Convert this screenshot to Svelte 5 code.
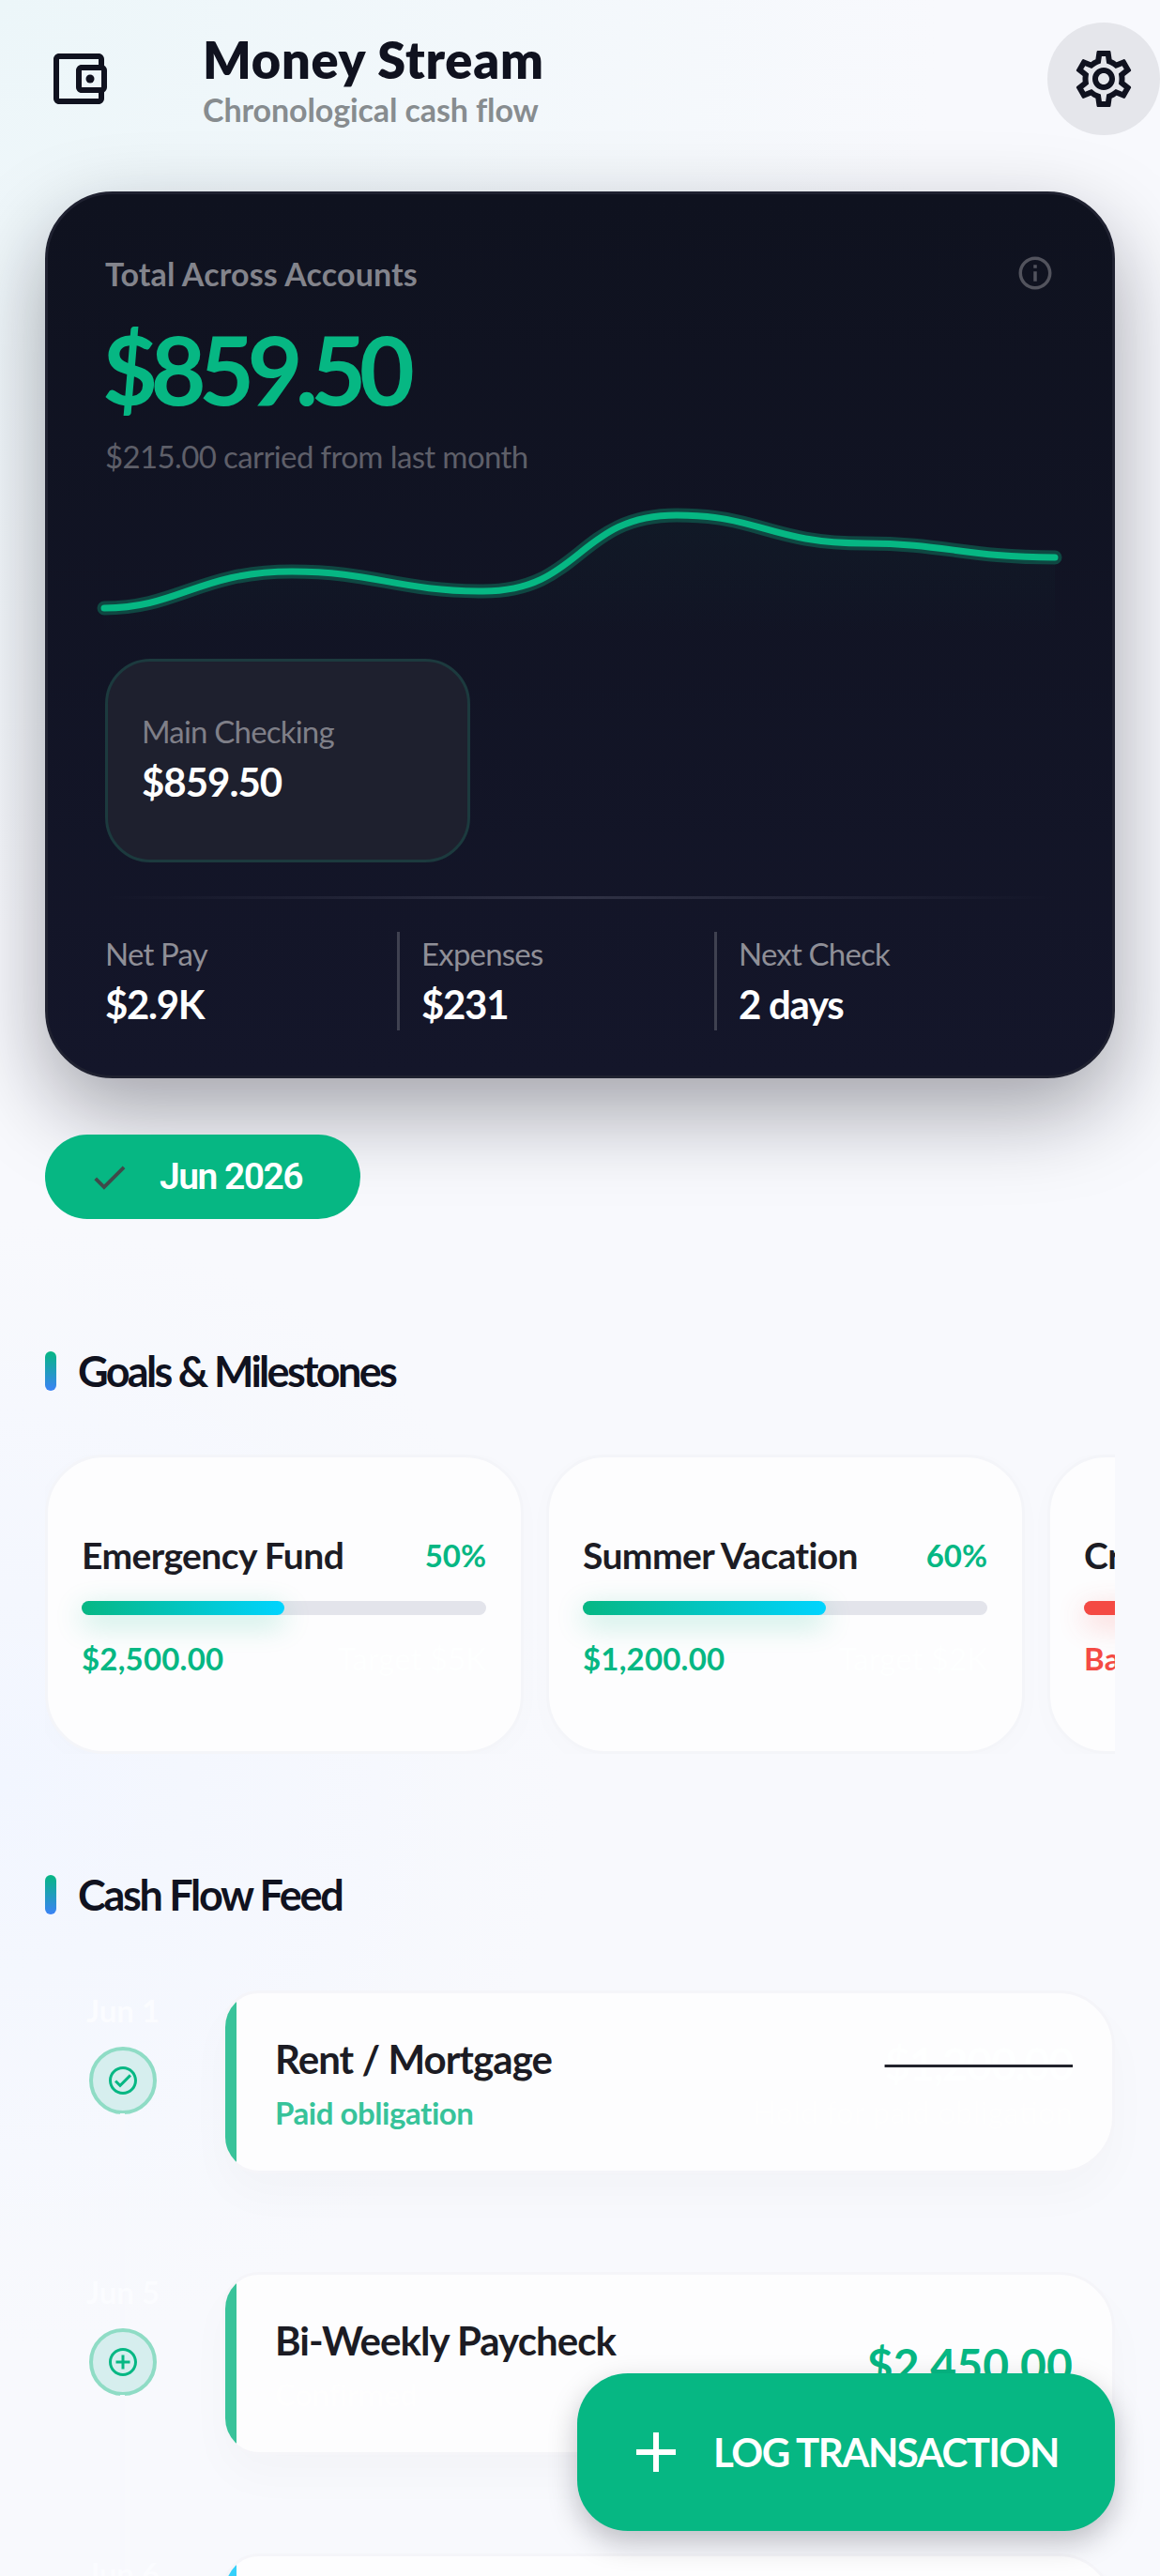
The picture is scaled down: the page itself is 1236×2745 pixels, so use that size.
<script>
  const stats = [
    { label: 'Net Pay', value: '$2.9K' },
    { label: 'Expenses', value: '$231' },
    { label: 'Next Check', value: '2 days' }
  ];
  const goals = [
    { name: 'Emergency Fund', pct: 50, amount: '$2,500.00', target: 'Target $5K', tone: 'green' },
    { name: 'Summer Vacation', pct: 60, amount: '$1,200.00', target: 'Target $2K', tone: 'green' },
    { name: 'Credit Card', pct: 30, amount: 'Balance $900', target: 'Target $0', tone: 'red' }
  ];
  const feed = [
    { date: 'Jun 1', icon: 'check', title: 'Rent / Mortgage', sub: 'Paid obligation', subClass: 'paid', amount: '$1,200.00', note: 'Hold for paid obligation', struck: true, tone: 'green' },
    { date: 'Jun 5', icon: 'plus', title: 'Bi-Weekly Paycheck', sub: 'Confirmed', subClass: 'ghost', amount: '$2,450.00', note: '', struck: false, tone: 'green' },
    { date: 'Jun 6', icon: 'plus', title: 'Groceries', sub: 'Planned', subClass: 'ghost', amount: '$120.00', note: '', struck: false, tone: 'cyan' }
  ];
  const spark = 'M111 648 C190 648 212 609 311 609 C398 609 425 630 515 630 C620 630 615 549 721 549 C810 549 820 579 922 579 C1005 579 1030 594 1124 594';
</script>

<div class="page">
  <header class="top">
    <svg class="wallet" viewBox="0 0 24 24" aria-hidden="true">
      <path d="M21 7.28V5c0-1.1-.9-2-2-2H5c-1.11 0-2 .9-2 2v14c0 1.1.89 2 2 2h14c1.1 0 2-.9 2-2v-2.28c.59-.35 1-.98 1-1.72V9c0-.74-.41-1.37-1-1.72zM20 9v6h-7V9h7zM5 19V5h14v2h-6c-1.1 0-2 .9-2 2v6c0 1.1.9 2 2 2h6v2H5z"/>
      <circle cx="16" cy="12" r="1.5"/>
    </svg>
    <div class="heading">
      <h1>Money Stream</h1>
      <p>Chronological cash flow</p>
    </div>
    <button class="gear" aria-label="Settings">
      <svg viewBox="0 0 24 24" aria-hidden="true">
        <path d="M19.43 12.98c.04-.32.07-.64.07-.98 0-.34-.03-.66-.07-.98l2.11-1.65c.19-.15.24-.42.12-.64l-2-3.46c-.09-.16-.26-.25-.44-.25-.06 0-.12.01-.17.03l-2.49 1c-.52-.4-1.08-.73-1.69-.98l-.38-2.65C14.46 2.18 14.25 2 14 2h-4c-.25 0-.46.18-.49.42l-.38 2.65c-.61.25-1.17.59-1.69.98l-2.49-1c-.06-.02-.12-.03-.18-.03-.17 0-.34.09-.43.25l-2 3.46c-.13.22-.07.49.12.64l2.11 1.65c-.04.32-.07.65-.07.98 0 .33.03.66.07.98l-2.11 1.65c-.19.15-.24.42-.12.64l2 3.46c.09.16.26.25.44.25.06 0 .12-.01.17-.03l2.49-1c.52.4 1.08.73 1.69.98l.38 2.65c.03.24.24.42.49.42h4c.25 0 .46-.18.49-.42l.38-2.65c.61-.25 1.17-.59 1.69-.98l2.49 1c.06.02.12.03.18.03.17 0 .34-.09.43-.25l2-3.46c.12-.22.07-.49-.12-.64l-2.11-1.65zm-1.98-1.71c.04.31.05.52.05.73 0 .21-.02.43-.05.73l-.14 1.13.89.7 1.08.84-.7 1.21-1.27-.51-1.04-.42-.9.68c-.43.32-.84.56-1.25.73l-1.06.43-.16 1.13-.2 1.35h-1.4l-.19-1.35-.16-1.13-1.06-.43c-.43-.18-.83-.41-1.23-.71l-.91-.7-1.06.43-1.27.51-.7-1.21 1.08-.84.89-.7-.14-1.13c-.03-.31-.05-.54-.05-.74s.02-.43.05-.73l.14-1.13-.89-.7-1.08-.84.7-1.21 1.27.51 1.04.42.9-.68c.43-.32.84-.56 1.25-.73l1.06-.43.16-1.13.2-1.35h1.39l.19 1.35.16 1.13 1.06.43c.43.18.83.41 1.23.71l.91.7 1.06-.43 1.27-.51.7 1.21-1.07.85-.89.7.14 1.13zM12 8c-2.21 0-4 1.79-4 4s1.79 4 4 4 4-1.79 4-4-1.79-4-4-4zm0 6c-1.1 0-2-.9-2-2s.9-2 2-2 2 .9 2 2-.9 2-2 2z"/>
      </svg>
    </button>
  </header>

  <section class="hero">
    <div class="hero-top">
      <span class="hero-label">Total Across Accounts</span>
      <svg class="info" viewBox="0 0 24 24" aria-hidden="true">
        <path d="M11 7h2v2h-2zm0 4h2v6h-2zm1-9C6.48 2 2 6.48 2 12s4.48 10 10 10 10-4.48 10-10S17.52 2 12 2zm0 18c-4.41 0-8-3.59-8-8s3.59-8 8-8 8 3.59 8 8-3.59 8-8 8z"/>
      </svg>
    </div>
    <div class="hero-amount">$859.50</div>
    <div class="hero-sub">$215.00 carried from last month</div>
    <svg class="spark" viewBox="100 530 1034 150" aria-hidden="true">
      <defs>
        <linearGradient id="sparkfill" x1="0" y1="0" x2="0" y2="1">
          <stop offset="0" stop-color="#06b783" stop-opacity="0.035"/>
          <stop offset="1" stop-color="#06b783" stop-opacity="0"/>
        </linearGradient>
      </defs>
      <path d="{spark} L1124 680 L111 680 Z" fill="url(#sparkfill)"/>
      <path d={spark} class="halo"/>
      <path d={spark} class="line"/>
    </svg>
    <div class="account">
      <span class="account-name">Main Checking</span>
      <span class="account-value">$859.50</span>
    </div>
    <div class="rule"></div>
    <div class="stats">
      {#each stats as s}
        <div class="stat">
          <span class="stat-label">{s.label}</span>
          <span class="stat-value">{s.value}</span>
        </div>
      {/each}
    </div>
  </section>

  <button class="chip">
    <svg viewBox="0 0 24 24" aria-hidden="true"><path d="M9 16.17L4.83 12l-1.42 1.41L9 19 21 7l-1.41-1.41z"/></svg>
    <span>Jun 2026</span>
  </button>

  <h2 class="section goals-head"><i></i>Goals &amp; Milestones</h2>
  <div class="goals">
    {#each goals as g}
      <article class="goal {g.tone}">
        <div class="goal-row">
          <span class="goal-name">{g.name}</span>
          <span class="goal-pct">{g.pct}%</span>
        </div>
        <div class="track"><div class="fill" style="width: {g.pct}%"></div></div>
        <div class="goal-row foot">
          <span class="goal-amount">{g.amount}</span>
          <span class="goal-target">{g.target}</span>
        </div>
      </article>
    {/each}
  </div>

  <h2 class="section feed-head"><i></i>Cash Flow Feed</h2>
  <div class="feed">
    {#each feed as t}
      <div class="item">
        <div class="when">
          <span class="date">{t.date}</span>
          <span class="node">
            <svg viewBox="0 0 24 24" aria-hidden="true">
              {#if t.icon === 'check'}
                <path d="M12 2C6.48 2 2 6.48 2 12s4.48 10 10 10 10-4.48 10-10S17.52 2 12 2zm0 18c-4.41 0-8-3.59-8-8s3.59-8 8-8 8 3.59 8 8-3.59 8-8 8zm4.59-12.42L10 14.17l-2.59-2.58L6 13l4 4 8-8z"/>
              {:else}
                <path d="M13 7h-2v4H7v2h4v4h2v-4h4v-2h-4V7zm-1-5C6.48 2 2 6.48 2 12s4.48 10 10 10 10-4.48 10-10S17.52 2 12 2zm0 18c-4.41 0-8-3.59-8-8s3.59-8 8-8 8 3.59 8 8-3.59 8-8 8z"/>
              {/if}
            </svg>
          </span>
        </div>
        <article class="tx {t.tone}">
          <div class="tx-left">
            <span class="tx-title">{t.title}</span>
            <span class="tx-sub {t.subClass}">{t.sub}</span>
          </div>
          <div class="tx-right">
            <span class="tx-amount" class:struck={t.struck}>{t.amount}</span>
            {#if t.note}<span class="tx-note">{t.note}</span>{/if}
          </div>
        </article>
      </div>
    {/each}
  </div>

  <button class="fab">
    <svg viewBox="0 0 24 24" aria-hidden="true"><path d="M19 13h-6v6h-2v-6H5v-2h6V5h2v6h6v2z"/></svg>
    <span>LOG TRANSACTION</span>
  </button>
</div>

<style>
  :global(body) {
    margin: 0;
  }
  .page {
    position: relative;
    height: 2745px;
    overflow: hidden;
    font-family: Lato, "Noto Sans", sans-serif;
    color: #10121f;
    background:
      radial-gradient(circle at 0 0, #ecf6f9 0, rgba(236, 246, 249, 0) 1000px),
      radial-gradient(circle at 0 1900px, #f2f6ff 0, rgba(242, 246, 255, 0) 600px),
      #f8f9fd;
  }
  button {
    font: inherit;
    border: 0;
    cursor: pointer;
  }

  .top {
    display: flex;
    align-items: center;
    height: 120px;
    padding: 24px 0 0 48px;
  }
  .wallet {
    width: 72px;
    height: 72px;
    fill: #10121f;
    flex: none;
  }
  .heading {
    flex: 1;
    margin-left: 96px;
  }
  h1 {
    margin: 0;
    font-size: 54px;
    line-height: 62px;
    font-weight: 800;
    letter-spacing: 0.8px;
  }
  .heading p {
    margin: 3px 0 0;
    font-size: 34px;
    line-height: 38px;
    font-weight: 700;
    letter-spacing: -0.1px;
    color: #878c8f;
  }
  .gear {
    width: 120px;
    height: 120px;
    border-radius: 50%;
    background: #e5e6eb;
    padding: 24px;
    flex: none;
  }
  .gear svg {
    display: block;
    width: 72px;
    height: 72px;
    fill: #10121f;
  }

  .hero {
    box-sizing: border-box;
    width: 1140px;
    height: 945px;
    margin: 60px 0 0 48px;
    padding: 63px 61px 48px;
    border: 3px solid #1f2130;
    border-radius: 72px;
    background: linear-gradient(180deg, #0f121f, #14162a);
    box-shadow: 0 36px 90px rgba(10, 10, 25, 0.36);
  }
  .hero-top {
    display: flex;
    justify-content: space-between;
    align-items: center;
    height: 42px;
  }
  .hero-label {
    font-size: 34px;
    font-weight: 700;
    letter-spacing: 0.15px;
    color: #83848c;
  }
  .info {
    width: 42px;
    height: 42px;
    fill: #52535d;
  }
  .hero-amount {
    margin: 27px 0 0 -3px;
    font-size: 102px;
    line-height: 108px;
    font-weight: 700;
    letter-spacing: -7.7px;
    color: #06b783;
  }
  .hero-sub {
    margin-top: 18px;
    font-size: 33px;
    line-height: 42px;
    letter-spacing: -0.62px;
    color: #5e5f69;
  }
  .spark {
    display: block;
    width: 1034px;
    height: 150px;
    margin: 23px 0 0 -12px;
    overflow: visible;
    fill: none;
  }
  .halo {
    stroke: #0f4742;
    stroke-width: 15;
    stroke-linecap: round;
    fill: none;
  }
  .line {
    stroke: #06b783;
    stroke-width: 7;
    stroke-linecap: round;
    fill: none;
  }
  .account {
    box-sizing: border-box;
    width: 389px;
    height: 217px;
    margin-top: 22px;
    padding: 0 0 3px 36px;
    display: flex;
    flex-direction: column;
    justify-content: center;
    border: 3px solid #1c3a3e;
    border-radius: 48px;
    background: #1e202e;
  }
  .account-name {
    font-size: 33px;
    line-height: 36px;
    letter-spacing: -0.8px;
    color: #7f7f88;
  }
  .account-value {
    margin-top: 12px;
    font-size: 42px;
    line-height: 48px;
    font-weight: 700;
    letter-spacing: -1px;
    color: #fff;
  }
  .rule {
    height: 3px;
    margin-top: 36px;
    background: linear-gradient(90deg, transparent, #2f3144 50%, transparent);
  }
  .stats {
    display: grid;
    grid-template-columns: 311px 338px 1fr;
    height: 105px;
    margin-top: 35px;
  }
  .stat {
    display: flex;
    flex-direction: column;
    justify-content: center;
    padding-left: 23px;
    border-left: 3px solid #3f4150;
  }
  .stat:first-child {
    padding-left: 0;
    border-left: 0;
  }
  .stat-label {
    font-size: 33px;
    line-height: 36px;
    letter-spacing: -0.8px;
    color: #8f8f97;
  }
  .stat-value {
    margin-top: 12px;
    font-size: 42px;
    line-height: 48px;
    font-weight: 700;
    letter-spacing: -1.3px;
    color: #fff;
  }

  .chip {
    display: flex;
    align-items: center;
    box-sizing: border-box;
    width: 336px;
    height: 90px;
    margin: 60px 0 0 48px;
    padding: 0 0 0 46px;
    border-radius: 45px;
    background: #06b783;
    color: #fff;
    font-family: Roboto, sans-serif;
    font-size: 39px;
    font-weight: 600;
    letter-spacing: -1.5px;
  }
  .chip svg {
    width: 45px;
    height: 45px;
    fill: #3f4a4a;
    flex: none;
    margin-right: 31px;
  }

  .section {
    display: flex;
    align-items: center;
    height: 42px;
    margin: 0 0 0 48px;
    font-size: 45px;
    font-weight: 700;
    color: #10121f;
  }
  .section i {
    width: 12px;
    height: 42px;
    margin-right: 23px;
    border-radius: 6px;
    background: linear-gradient(180deg, #06b783, #3b82f6);
  }
  .goals-head {
    margin-top: 141px;
    letter-spacing: -2.7px;
  }
  .feed-head {
    margin-top: 129px;
    letter-spacing: -2.3px;
  }

  .goals {
    display: flex;
    gap: 24px;
    width: 1140px;
    height: 319px;
    margin: 68px 0 0 48px;
    overflow: hidden;
  }
  .goal {
    box-sizing: border-box;
    flex: none;
    width: 510px;
    height: 319px;
    padding: 3px 37px 0 36px;
    display: flex;
    flex-direction: column;
    justify-content: center;
    border: 3px solid #f4f5f9;
    border-radius: 63px;
    background: #fdfdfe;
    box-shadow: 0 6px 30px rgba(0, 0, 0, 0.015);
  }
  .goal-row {
    display: flex;
    justify-content: space-between;
    align-items: center;
    height: 48px;
  }
  .goal-row.foot {
    height: 44px;
    margin-top: 24px;
  }
  .goal-name {
    font-size: 39px;
    font-weight: 700;
    letter-spacing: -0.6px;
    white-space: nowrap;
    color: #1c1c24;
  }
  .goal-pct {
    font-size: 33px;
    font-weight: 700;
    color: #06b783;
  }
  .goal.red .goal-pct,
  .goal.red .goal-amount {
    color: #f44a44;
  }
  .track {
    height: 15px;
    margin-top: 25px;
    border-radius: 8px;
    background: #e3e4eb;
  }
  .fill {
    height: 100%;
    border-radius: 8px;
    background: linear-gradient(90deg, #06b783, #00d4ff);
    box-shadow: 0 9px 30px rgba(6, 183, 131, 0.3);
  }
  .goal.red .fill {
    background: #f44a44;
    box-shadow: 0 9px 30px rgba(244, 74, 68, 0.3);
  }
  .goal-amount {
    font-size: 33px;
    font-weight: 700;
    letter-spacing: 0.2px;
    color: #06b783;
    white-space: nowrap;
  }
  .goal-target {
    font-size: 33px;
    color: #feffff;
    white-space: nowrap;
  }

  .feed {
    margin: 81px 48px 0 48px;
  }
  .item {
    display: grid;
    grid-template-columns: 166px 1fr;
    column-gap: 23px;
    margin-bottom: 105px;
  }
  .when {
    position: relative;
    display: flex;
    flex-direction: column;
    align-items: center;
    padding-top: 3px;
  }
  .when::after {
    content: "";
    position: absolute;
    left: 80px;
    top: 131px;
    width: 5px;
    height: 228px;
    background: #f7f8fd;
  }
  .date {
    font-size: 33px;
    line-height: 36px;
    font-weight: 700;
    color: #fbfcff;
  }
  .node {
    box-sizing: border-box;
    display: flex;
    align-items: center;
    justify-content: center;
    width: 72px;
    height: 72px;
    margin-top: 21px;
    border: 4.5px solid #8fdcc5;
    border-radius: 50%;
    background: #d6eeee;
  }
  .node svg {
    width: 36px;
    height: 36px;
    fill: #06b783;
  }
  .tx {
    position: relative;
    box-sizing: border-box;
    display: flex;
    justify-content: space-between;
    align-items: center;
    height: 195px;
    padding: 3px 42px 0 53px;
    overflow: hidden;
    border: 3px solid #f5f5f9;
    border-radius: 39px 60px 60px 39px;
    background: #fdfdfe;
    box-shadow: 0 24px 48px rgba(0, 0, 0, 0.025);
  }
  .tx::before {
    content: "";
    position: absolute;
    left: 0;
    top: 0;
    bottom: 0;
    width: 12px;
    background: #39c39a;
  }
  .tx.cyan::before {
    background: #35d0fa;
  }
  .tx-left,
  .tx-right {
    display: flex;
    flex-direction: column;
  }
  .tx-right {
    align-items: flex-end;
  }
  .tx-title {
    font-size: 42px;
    line-height: 48px;
    font-weight: 700;
    letter-spacing: -0.95px;
    color: #1c1c24;
  }
  .tx-sub {
    margin-top: 14px;
    font-size: 33px;
    line-height: 38px;
    font-weight: 700;
    letter-spacing: -0.45px;
  }
  .tx-sub.paid {
    color: #37c39a;
  }
  .tx-sub.ghost {
    color: #fefefe;
  }
  .tx-amount {
    font-size: 48px;
    line-height: 54px;
    font-weight: 700;
    letter-spacing: 0.2px;
    color: #06b783;
  }
  .tx-amount.struck {
    letter-spacing: -1.9px;
    color: #feffff;
    text-decoration: line-through 3px #22232c;
  }
  .tx-note {
    margin-top: 5px;
    font-size: 33px;
    line-height: 38px;
    color: #fefefe;
  }

  .fab {
    position: absolute;
    right: 48px;
    bottom: 48px;
    display: flex;
    align-items: center;
    box-sizing: border-box;
    width: 573px;
    height: 168px;
    padding: 0 0 0 48px;
    border-radius: 54px;
    background: #06b783;
    color: #fff;
    box-shadow: 0 12px 30px rgba(10, 10, 25, 0.25);
  }
  .fab svg {
    width: 72px;
    height: 72px;
    fill: #fff;
    flex: none;
  }
  .fab span {
    margin-left: 25px;
    font-size: 42px;
    font-weight: 700;
    letter-spacing: -1.5px;
  }
</style>
